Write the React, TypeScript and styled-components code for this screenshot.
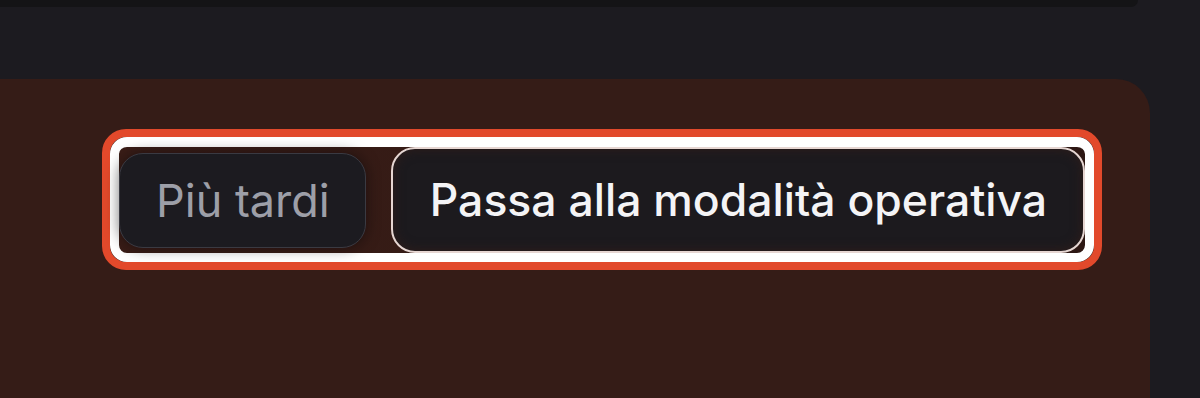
import styled, { createGlobalStyle } from 'styled-components';

const GlobalStyle = createGlobalStyle`
  html, body {
    margin: 0;
    padding: 0;
    background: #1c1b20;
    font-family: 'Inter', 'Noto Sans', sans-serif;
  }
`;

const PageStyles = styled.div`
  display: flex;
  flex-direction: column;
  height: 398px;
  overflow: hidden;
`;

const TopBarStyles = styled.div`
  height: 7px;
  margin-right: 62px;
  background-color: #141416;
  border-bottom-right-radius: 12px;
`;

const CardStyles = styled.div`
  flex: 1;
  margin-top: 72px;
  margin-right: 50px;
  padding: 50px 0 0 102px;
  background-color: #351c17;
  border-top-right-radius: 34px;
`;

const HighlightStyles = styled.div`
  display: inline-flex;
  border: 8px solid #e2492b;
  border-radius: 24px;
`;

const RingStyles = styled.div`
  display: flex;
  flex-direction: row;
  align-items: center;
  gap: 25px;
  border: 9px solid #ffffff;
  border-top-width: 10px;
  border-radius: 17px;
  background: linear-gradient(90deg, #3a1d17 0%, #321a15 50%, #2d1713 100%);
`;

const LaterButtonStyles = styled.button`
  height: 95px;
  padding: 0 35px 0 36px;
  border: 1px solid #3a3a42;
  border-radius: 24px;
  background-color: #1c1b20;
  color: #9d9fa8;
  font-family: 'Inter', sans-serif;
  font-size: 45px;
  font-weight: 400;
  box-shadow: 0 0 14px rgba(10, 8, 10, 0.55);
  cursor: pointer;
`;

const SwitchButtonStyles = styled.button`
  height: 106px;
  padding: 0 36px 0 37px;
  border: 2px solid #e6d6d2;
  border-radius: 24px;
  background-color: #1c1a1e;
  color: #f4f4f6;
  font-family: 'Inter', sans-serif;
  font-size: 44.5px;
  font-weight: 500;
  box-shadow: inset 0 0 12px rgba(60, 30, 24, 0.6);
  cursor: pointer;
`;

export default function App() {
  return (
    <>
      <GlobalStyle />
      <PageStyles>
        <TopBarStyles />
        <CardStyles>
          <HighlightStyles>
            <RingStyles>
              <LaterButtonStyles>Più tardi</LaterButtonStyles>
              <SwitchButtonStyles>Passa alla modalità operativa</SwitchButtonStyles>
            </RingStyles>
          </HighlightStyles>
        </CardStyles>
      </PageStyles>
    </>
  );
}
